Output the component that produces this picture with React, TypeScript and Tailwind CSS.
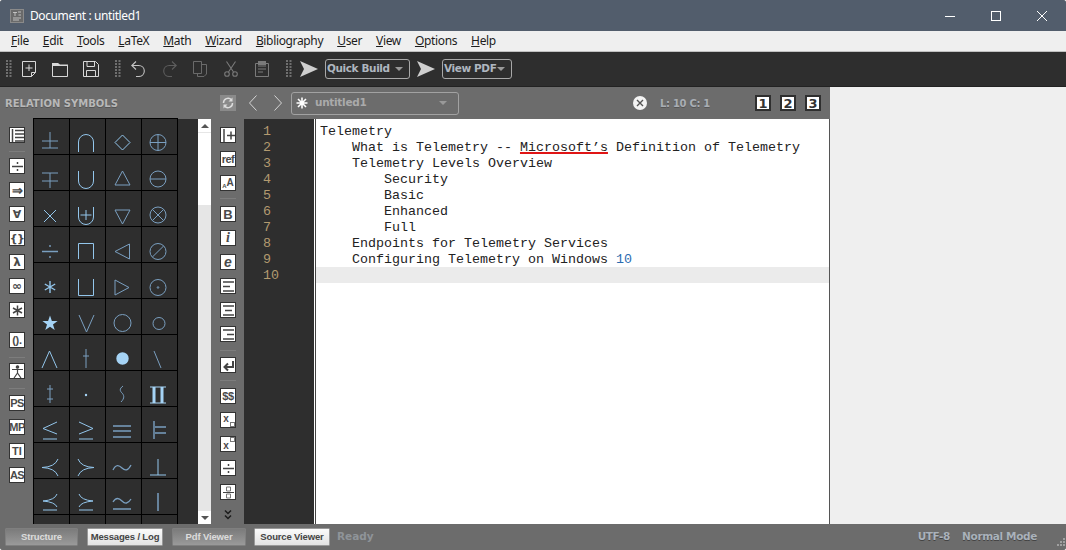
import React from 'react';

const circ = (cx: number, cy: number, r: number) =>
  `M${cx - r} ${cy}a${r} ${r} 0 1 0 ${2 * r} 0a${r} ${r} 0 1 0 ${-2 * r} 0`;

interface Sym {
  d?: string;
  dim?: boolean;
  fill?: boolean;
  w?: number;
}

// symbol cells, coordinates are relative to the grid line above / left of the cell
const symbols: Sym[] = [
  { d: 'M9 22H25M17 13V29M9 29H25', dim: true },
  { d: 'M9.5 33V23a7.5 7.5 0 0 1 15 0V33' },
  { d: 'M17.5 16L25 23.5L17.5 31L10 23.5Z' },
  { d: circ(17, 23.5, 8) + 'M9 23.5H25M17 15.5V31.5', dim: true },

  { d: 'M9 18H25M9 26H25M17 18V33', dim: true },
  { d: 'M9.5 16V26a7.5 7.5 0 0 0 15 0V16' },
  { d: 'M17.5 16L25 30H10Z', dim: true },
  { d: circ(17, 24, 8) + 'M9 24H25', dim: true },

  { d: 'M11 19L23 31M23 19L11 31' },
  { d: 'M9.5 16V26a7.5 7.5 0 0 0 15 0V16M11.5 24H22.5M17 19V29' },
  { d: 'M10 19H25L17.5 33Z', dim: true },
  { d: circ(17, 24, 8) + 'M11.4 18.4L22.6 29.6M22.6 18.4L11.4 29.6', dim: true },

  { d: 'M9 24.5H25M17 18V20M17 29V31', dim: true, w: 1.4 },
  { d: 'M9.5 32V16.5H24.5V32' },
  { d: 'M24.5 17V32L10 24.5Z', dim: true },
  { d: circ(17, 24.5, 8) + 'M11.4 30L22.6 19', dim: true },

  { d: 'M17 18V30M11.8 21L22.2 27M22.2 21L11.8 27', w: 1.4 },
  { d: 'M9.5 16V32.5H24.5V16' },
  { d: 'M10 17V32L24 24.5Z', dim: true },
  { d: circ(17, 24.5, 8) + circ(17, 24.5, 0.8), dim: true },

  { d: 'M17 16.5L18.9 22H24.6L20 25.5L21.7 31L17 27.7L12.3 31L14 25.5L9.4 22H15.1Z', fill: true },
  { d: 'M10 16L17.5 33L25 16', dim: true },
  { d: circ(17.5, 24, 8.5), dim: true },
  { d: circ(18, 24.5, 6), dim: true },

  { d: 'M9 33L16.5 16L24 33' },
  { d: 'M17 14V33M14 21H20', dim: true },
  { d: circ(17.5, 23.5, 6.2), fill: true },
  { d: 'M13 16L20 33', dim: true },

  { d: 'M17 14V32M14 18H20M14 28H20', dim: true },
  { d: circ(17, 24, 1.2), fill: true },
  { d: 'M18 15C14 18 15 20 17 22S20 27 16 31', dim: true },
  { d: 'M9 15.5H25V16.5H9ZM9 31.5H25V32.5H9ZM11.5 16H14.5V32H11.5ZM19.5 16H22.5V32H19.5Z', fill: true },

  { d: 'M24 15L10 21.5L24 27M10 32H24' },
  { d: 'M10 15L24 21.5L10 27M10 32H24' },
  { d: 'M8 19H26M8 24H26M8 30H26', dim: true, w: 1.3 },
  { d: 'M13 14V32M14 20H25M14 26H25', dim: true, w: 1.4 },

  { d: 'M25 16Q22 24 9 24.5Q22 25 25 33' },
  { d: 'M9 16Q12 24 25 24.5Q12 25 9 33' },
  { d: 'M8 27C11 21 14 22 17 25S23 28 26 22', dim: true, w: 1.3 },
  { d: 'M17 16V32M9 32H25' },

  { d: 'M24 15Q22 21 10 22Q22 23 24 28M10 31H24' },
  { d: 'M10 15Q12 21 24 22Q12 23 10 28M10 31H24' },
  { d: 'M8 23C11 18 14 19 17 22S23 25 26 20M8 30H26', dim: true, w: 1.3 },
  { d: 'M17 14V32', dim: true, w: 1.5 },

  {}, {}, {}, {},
];

const SymbolCell: React.FC<{ s: Sym }> = ({ s }) => (
  <div className="bg-[#2e2e2e]">
    {s.d && (
      <svg viewBox="1 0 35 35" className="w-[35px] h-[35px]">
        <path
          d={s.d}
          fill={s.fill ? '#a5d3f5' : 'none'}
          stroke={s.fill ? 'none' : s.dim ? '#7a9fc0' : '#93c6ec'}
          strokeWidth={s.w ?? 1}
        />
      </svg>
    )}
  </div>
);

const Tool: React.FC<{ className?: string; children: React.ReactNode }> = ({ className = '', children }) => (
  <div
    className={`w-4 h-4 shrink-0 flex items-center justify-center bg-white border-[1.5px] border-[#333] text-[#4a4a4a] font-bold text-[11px] leading-none whitespace-nowrap ${className}`}
  >
    {children}
  </div>
);

const Sep: React.FC<{ className?: string }> = ({ className = '' }) => (
  <div className={`w-4 h-px shrink-0 bg-[#7d7d7d] ${className}`} />
);

const Lines: React.FC<{ d: string }> = ({ d }) => (
  <svg viewBox="0 0 13 13" className="w-[13px] h-[13px]" fill="none" stroke="#444" strokeWidth="1.5">
    <path d={d} />
  </svg>
);

const Grip: React.FC<{ className?: string }> = ({ className = '' }) => (
  <svg viewBox="0 0 6 18" className={`w-[6px] h-[18px] shrink-0 ${className}`} fill="#6f6f6f">
    {[0, 3, 6, 9, 12, 15].map((y) => (
      <React.Fragment key={y}>
        <rect x="0" y={y} width="2" height="2" />
        <rect x="3.5" y={y} width="2" height="2" />
      </React.Fragment>
    ))}
  </svg>
);

const PlayArrow: React.FC<{ className?: string }> = ({ className = '' }) => (
  <svg viewBox="0 0 18 16" className={`w-[18px] h-4 shrink-0 ${className}`} fill="#cfcfcf">
    <path d="M0 0L18 8L0 16L4 8Z" />
  </svg>
);

const Combo: React.FC<{ label: string; className: string }> = ({ label, className }) => (
  <div className={`h-5 shrink-0 flex items-center justify-between pl-[1px] pr-[6px] border border-[#a8a8a8] rounded-[3px] ${className}`}>
    <span className="font-['DejaVu_Sans'] font-bold text-[10.5px] text-[#aeb6bf] tracking-[-0.4px]">{label}</span>
    <span className="w-0 h-0 border-x-[4px] border-x-transparent border-t-[4px] border-t-[#999]" />
  </div>
);

const menus = ['File', 'Edit', 'Tools', 'LaTeX', 'Math', 'Wizard', 'Bibliography', 'User', 'View', 'Options', 'Help'];

const editorLines: React.ReactNode[] = [
  'Telemetry',
  <>
    {'    What is Telemetry -- '}
    <span className="underline decoration-[#e01515] decoration-[1.5px] underline-offset-[1px]">Microsoft’s</span>
    {' Definition of Telemetry'}
  </>,
  '    Telemetry Levels Overview',
  '        Security',
  '        Basic',
  '        Enhanced',
  '        Full',
  '    Endpoints for Telemetry Services',
  <>
    {'    Configuring Telemetry on Windows '}
    <span className="text-[#2b6cb0]">10</span>
  </>,
  '',
];

const ViewButton: React.FC<{ label: string; active?: boolean; className: string }> = ({ label, active, className }) => (
  <div
    className={`h-[18px] shrink-0 flex items-center justify-center whitespace-nowrap font-bold text-[9.5px] tracking-[-0.15px] rounded-[1px] ${
      active
        ? 'bg-gradient-to-b from-[#fbfbfb] to-[#e2e2e2] text-[#444] border border-[#999]'
        : 'bg-gradient-to-b from-[#7b7b7b] to-[#9a9a9a] text-[#dcdcdc] border border-[#7f7f7f]'
    } ${className}`}
  >
    {label}
  </div>
);

export default function App() {
  return (
    <div className="w-[1066px] h-[550px] flex flex-col overflow-hidden rounded-[3px] bg-[#6c6c6c] font-['Liberation_Sans',sans-serif]">
      {/* Title bar */}
      <div className="h-[31px] shrink-0 flex items-center bg-[#525d6c] pl-[10px] pr-px">
        <svg viewBox="0 0 14 14" className="w-[14px] h-[14px] shrink-0">
          <rect width="14" height="14" fill="#8a8a8a" />
          <rect x="1" y="1" width="12" height="12" fill="#6a6a6a" />
          <path d="M3 3.5H7M5 3.5V7M8 3H11M8.5 6H11M3 9H11M3 11H9" stroke="#d5d5d5" strokeWidth="0.8" fill="none" />
        </svg>
        <span className="ml-[6px] font-['Noto_Sans'] text-[12px] tracking-[-0.4px] text-white">Document : untitled1</span>
        <div className="ml-auto flex">
          <div className="w-[46px] h-[31px] flex items-center justify-center">
            <svg viewBox="0 0 10 10" className="w-[10px] h-[10px]" stroke="#fff" strokeWidth="1"><path d="M0 5.5H10" /></svg>
          </div>
          <div className="w-[46px] h-[31px] flex items-center justify-center">
            <svg viewBox="0 0 10 10" className="w-[10px] h-[10px]" stroke="#fff" strokeWidth="1" fill="none"><rect x="0.5" y="0.5" width="9" height="9" /></svg>
          </div>
          <div className="w-[46px] h-[31px] flex items-center justify-center">
            <svg viewBox="0 0 10 10" className="w-[10px] h-[10px]" stroke="#fff" strokeWidth="1"><path d="M0 0L10 10M10 0L0 10" /></svg>
          </div>
        </div>
      </div>

      {/* Menu bar */}
      <div className="h-[21px] shrink-0 flex items-center gap-[14px] pl-[11px] bg-[#efefef] border-b border-[#c0c0c0] font-['Noto_Sans'] text-[12px] tracking-[-0.35px] text-[#1c1c1c]">
        {menus.map((m) => (
          <span key={m}>
            <span className="underline">{m[0]}</span>
            {m.slice(1)}
          </span>
        ))}
      </div>

      {/* Main toolbar */}
      <div className="h-[35px] shrink-0 flex items-center pl-[6px] bg-[#2e2e2e] border-b border-[#222]">
        <Grip />
        <svg viewBox="0 0 14 16" className="ml-[10px] w-[14px] h-4 shrink-0" fill="none" stroke="#d8d8d8">
          <path d="M.5.5H13.5V11.5L9.5 15.5H.5ZM9.5 15.5V11.5H13.5M7 3.5V10M3.5 7H10.5" />
        </svg>
        <svg viewBox="0 0 16 15" className="ml-4 w-4 h-[15px] shrink-0">
          <path d="M.5 3.5H15.5V14.5H.5Z" fill="none" stroke="#d8d8d8" />
          <path d="M0 4V1H6L8 2.5H16V4Z" fill="#d8d8d8" />
        </svg>
        <svg viewBox="0 0 16 16" className="ml-[15px] w-4 h-4 shrink-0" fill="none" stroke="#d8d8d8">
          <path d="M.5.5H12.5L15.5 3.5V15.5H.5ZM4 .5V5.5H11.5V.5M3.5 15.5V9.5H12.5V15.5" />
        </svg>
        <Grip className="ml-4" />
        <svg viewBox="0 0 14 16" className="ml-[10px] w-[14px] h-4 shrink-0" fill="none" stroke="#c4c4c4" strokeWidth="1.1">
          <path d="M5 .5L.8 4.5L5 8.5M1 4.5H7.5C11 4.5 13.3 7 13.3 10S11 15.5 7.5 15.5H5" />
        </svg>
        <svg viewBox="0 0 14 16" className="ml-[18px] w-[14px] h-4 shrink-0" fill="none" stroke="#5e5e5e" strokeWidth="1.1">
          <path d="M9 .5L13.2 4.5L9 8.5M13 4.5H6.5C3 4.5 .7 7 .7 10S3 15.5 6.5 15.5H9" />
        </svg>
        <svg viewBox="0 0 14 16" className="ml-4 w-[14px] h-4 shrink-0" fill="none" stroke="#6a6a6a">
          <path d="M.5.5H8.5V12.5H.5ZM8.5 3.5H13.5V13L11 15.5H4.5V12.5" />
        </svg>
        <svg viewBox="0 0 14 16" className="ml-[17px] w-[14px] h-4 shrink-0" fill="none" stroke="#7a7a7a" strokeWidth="1.1">
          <path d="M2.5.5L9.5 11M11.5.5L4.5 11" />
          <circle cx="3" cy="13" r="2.3" />
          <circle cx="11" cy="13" r="2.3" />
        </svg>
        <svg viewBox="0 0 14 16" className="ml-[17px] w-[14px] h-4 shrink-0" fill="none" stroke="#7a7a7a">
          <path d="M.5 2.5H13.5V15.5H.5ZM3 5H11M3 8H11M3 11H8" />
          <rect x="3.5" y="0" width="7" height="3.5" fill="#7a7a7a" />
        </svg>
        <Grip className="ml-[17px]" />
        <PlayArrow className="ml-2" />
        <Combo label="Quick Build" className="ml-[7px] w-[85px]" />
        <PlayArrow className="ml-[7px]" />
        <Combo label="View PDF" className="ml-[7px] w-[70px]" />
      </div>

      {/* Workspace */}
      <div className="flex-1 min-h-0 flex">
        {/* Structure panel */}
        <div className="w-[212px] shrink-0 flex flex-col">
          <div className="h-[32px] shrink-0 flex items-center pl-[5px] font-['DejaVu_Sans'] font-bold text-[10px] text-[#b8b8b8] [text-shadow:0_1px_0_#555]">
            RELATION SYMBOLS
          </div>
          <div className="flex-1 min-h-0 flex">
            <div className="w-[33px] shrink-0 flex flex-col pl-[9px] pt-2">
              <Tool>
                <Lines d="M1.5 0V13M4 1.5H13M4 5H13M4 8.5H13M4 12H13" />
              </Tool>
              <Sep className="mt-2" />
              <Tool className="mt-[6px]">
                <Lines d="M1 6.5H12M6.5 2V4M6.5 9V11" />
              </Tool>
              <Tool className="mt-2 text-[13px]">⇒</Tool>
              <Tool className="mt-2 font-['DejaVu_Sans'] text-[11px]">∀</Tool>
              <Tool className="mt-2 font-['DejaVu_Sans'] text-[8px] tracking-[-0.5px]">{'{}'}</Tool>
              <Tool className="mt-2 font-['DejaVu_Sans'] text-[12px]">λ</Tool>
              <Tool className="mt-2 font-['DejaVu_Sans'] text-[12px]">∞</Tool>
              <Tool className="mt-2">
                <Lines d="M6.5 1.5V11.5M2 4L11 9M11 4L2 9" />
              </Tool>
              <Tool className="mt-[14px] text-[9px] tracking-[-0.3px]">().</Tool>
              <Sep className="mt-[9px]" />
              <Tool className="mt-[5px]">
                <svg viewBox="0 0 13 13" className="w-[13px] h-[13px]" fill="none" stroke="#444" strokeWidth="1.2">
                  <circle cx="6.5" cy="2" r="1.2" fill="#444" />
                  <path d="M1 4.5H12M6.5 4V8M6.5 8L3 13M6.5 8L10 13" />
                </svg>
              </Tool>
              <Sep className="mt-[9px]" />
              <Tool className="mt-[6px] text-[10px] tracking-[-0.6px]">PS</Tool>
              <Tool className="mt-2 text-[8.5px] tracking-[-0.6px]">MP</Tool>
              <Tool className="mt-2">TI</Tool>
              <Tool className="mt-2 text-[10px] tracking-[-0.6px]">AS</Tool>
            </div>
            <div className="w-[145px] shrink-0 -mt-px h-[406px] overflow-hidden border-t border-black bg-black px-px grid grid-cols-[repeat(4,35px)] auto-rows-[35px] gap-px">
              {symbols.map((s, i) => (
                <SymbolCell key={i} s={s} />
              ))}
            </div>
            <div className="w-[20px] shrink-0 bg-[#2e2e2e]" />
            <div className="w-[13px] shrink-0 flex flex-col bg-[#e6e6e6]">
              <div className="h-[13px] shrink-0 bg-white flex items-center justify-center">
                <span className="w-0 h-0 border-x-[4px] border-x-transparent border-b-[4px] border-b-[#555]" />
              </div>
              <div className="mt-px h-[72px] shrink-0 bg-white" />
              <div className="mt-auto h-[13px] shrink-0 bg-white flex items-center justify-center">
                <span className="w-0 h-0 border-x-[4px] border-x-transparent border-t-[4px] border-t-[#555]" />
              </div>
            </div>
          </div>
        </div>

        {/* Editor tool strip */}
        <div className="w-[32px] shrink-0 flex flex-col">
          <div className="h-[32px] shrink-0 flex items-center pl-2">
            <svg viewBox="0 0 16 16" className="w-4 h-4">
              <rect width="16" height="16" fill="#8a8a8a" />
              <path d="M3.5 8A4.5 4.5 0 0 1 11.5 5M12.5 8A4.5 4.5 0 0 1 4.5 11" fill="none" stroke="#dcdcdc" strokeWidth="1.5" />
              <path d="M12.5 2.5V6.5H8.5ZM3.5 13.5V9.5H7.5Z" fill="#dcdcdc" />
            </svg>
          </div>
          <div className="flex-1 min-h-0 flex flex-col pl-2 pt-2">
            <Tool>
              <Lines d="M2 0V13M5 6.5H13M9 2.5V10.5" />
            </Tool>
            <Tool className="mt-2 text-[10px] tracking-[-0.5px]">ref</Tool>
            <Tool className="mt-2 items-end">
              <span className="text-[6px] leading-[7px]">A</span>
              <span className="text-[10px] leading-[12px] mb-[1px]">A</span>
            </Tool>
            <Sep className="mt-[7px]" />
            <Tool className="mt-[7px] text-[13px]">B</Tool>
            <Tool className="mt-2 font-['Liberation_Serif'] italic text-[14px]">i</Tool>
            <Tool className="mt-2 italic text-[14px]">e</Tool>
            <Tool className="mt-2">
              <Lines d="M1 2H12M1 6.5H8M1 11H12" />
            </Tool>
            <Tool className="mt-2">
              <Lines d="M1 2H12M3 6.5H10M1 11H12" />
            </Tool>
            <Tool className="mt-2">
              <Lines d="M1 2H12M5 6.5H12M1 11H12" />
            </Tool>
            <Sep className="mt-2" />
            <Tool className="mt-[6px]">
              <svg viewBox="0 0 13 13" className="w-[13px] h-[13px]" fill="none" stroke="#444" strokeWidth="2">
                <path d="M11 2V8H3M6 4.5L2.5 8L6 11.5" />
              </svg>
            </Tool>
            <Sep className="mt-[7px]" />
            <Tool className="mt-[7px] text-[10px] tracking-[-0.4px]">$$</Tool>
            <Tool className="mt-2 relative">
              <span className="mb-[3px] mr-[4px] text-[10px]">x</span>
              <span className="absolute right-0 bottom-0 w-[5px] h-[5px] border border-[#777]" />
            </Tool>
            <Tool className="mt-2 relative">
              <span className="mt-[3px] mr-[4px] text-[10px]">x</span>
              <span className="absolute right-0 top-0 w-[5px] h-[5px] border border-[#777]" />
            </Tool>
            <Tool className="mt-2">
              <Lines d="M1 6.5H12M6.5 2V4M6.5 9V11" />
            </Tool>
            <Tool className="mt-2">
              <svg viewBox="0 0 13 13" className="w-[13px] h-[13px]" fill="none" stroke="#777">
                <path d="M4.5 1H8.5V5H4.5ZM4.5 8H8.5V12H4.5Z" />
                <path d="M1 6.5H12" stroke="#444" />
              </svg>
            </Tool>
            <svg viewBox="0 0 8 10" className="ml-1 mt-[10px] w-2 h-[10px]" fill="none" stroke="#1c1c1c" strokeWidth="1.5">
              <path d="M1 .5L4 3.5L7 .5M1 5.5L4 8.5L7 5.5" />
            </svg>
          </div>
        </div>

        {/* Editor */}
        <div className="w-[586px] shrink-0 flex flex-col">
          <div className="h-[32px] shrink-0 flex items-center pl-[5px] pr-[9px]">
            <svg viewBox="0 0 8 16" className="w-2 h-4 shrink-0" fill="none" stroke="#d5d5d5"><path d="M7.5 .5L.5 8L7.5 15.5" /></svg>
            <svg viewBox="0 0 8 16" className="ml-[17px] w-2 h-4 shrink-0" fill="none" stroke="#d5d5d5"><path d="M.5 .5L7.5 8L.5 15.5" /></svg>
            <div className="ml-[9px] w-[168px] h-[23px] shrink-0 flex items-center pl-[4px] pr-[11px] border border-[#a2a2a2] rounded-[3px]">
              <svg viewBox="0 0 12 12" className="w-3 h-3 shrink-0" stroke="#fff" strokeWidth="1.6">
                <path d="M6 .5V11.5M.5 6H11.5M2 2L10 10M10 2L2 10" />
              </svg>
              <span className="ml-[7px] font-['DejaVu_Sans'] font-bold text-[10.5px] text-[#aaaaaa] tracking-[-0.3px]">untitled1</span>
              <span className="ml-auto w-0 h-0 border-x-[4px] border-x-transparent border-t-[4px] border-t-[#999]" />
            </div>
            <div className="ml-[174px] w-[14px] h-[14px] shrink-0 rounded-full bg-[#f4f4f4] flex items-center justify-center">
              <svg viewBox="0 0 8 8" className="w-2 h-2" stroke="#555" strokeWidth="1.4"><path d="M1 1L7 7M7 1L1 7" /></svg>
            </div>
            <span className="ml-[13px] font-['DejaVu_Sans'] font-bold text-[10px] text-[#a9aeb4] tracking-[-0.3px] [text-shadow:0_1px_0_#555]">L: 10 C: 1</span>
            <div className="ml-auto flex gap-[9px]">
              {['1', '2', '3'].map((n) => (
                <div key={n} className="w-4 h-4 flex items-center justify-center bg-white border-2 border-[#2f2f2f] font-['DejaVu_Sans'] font-bold text-[13px] leading-none text-[#333]">
                  {n}
                </div>
              ))}
            </div>
          </div>
          <div className="flex-1 min-h-0 flex bg-white border-r border-[#555]">
            <div className="w-[70px] shrink-0 pt-1 pl-[19px] bg-[#2e2e2e] font-['Liberation_Mono'] text-[13.33px] leading-[18px] text-[#b39a70]">
              {editorLines.map((_, i) => (
                <div key={i} className="h-4">{i + 1}</div>
              ))}
            </div>
            <div className="w-px shrink-0 ml-px bg-[#444]" />
            <div className="flex-1 min-w-0 pt-1 font-['Liberation_Mono'] text-[13.33px] leading-[18px] text-[#222]">
              {editorLines.map((l, i) => (
                <div key={i} className={`pl-1 h-4 whitespace-pre ${i === 9 ? 'bg-[#ebebeb]' : ''}`}>
                  {l}
                </div>
              ))}
            </div>
          </div>
        </div>

        {/* Empty viewer pane */}
        <div className="flex-1 bg-[#efefef]" />
      </div>

      {/* Status bar */}
      <div className="h-[26px] shrink-0 flex items-center pl-[5px] pr-[29px] bg-[#6c6c6c] relative">
        <ViewButton label="Structure" className="w-[73px]" />
        <ViewButton label="Messages / Log" active className="ml-[9px] w-[76px]" />
        <ViewButton label="Pdf Viewer" className="ml-[9px] w-[74px]" />
        <ViewButton label="Source Viewer" active className="ml-2 w-[76px]" />
        <span className="ml-[7px] font-['DejaVu_Sans'] font-bold text-[10.5px] text-[#8f9499]">Ready</span>
        <span className="ml-auto font-['DejaVu_Sans'] font-bold text-[10.5px] text-[#aab2bb] tracking-[-0.35px] [text-shadow:0_1px_0_#444]">UTF-8</span>
        <span className="ml-3 font-['DejaVu_Sans'] font-bold text-[10.5px] text-[#aab2bb] tracking-[-0.35px] [text-shadow:0_1px_0_#444]">Normal Mode</span>
        <svg viewBox="0 0 10 10" className="absolute right-px bottom-[2px] w-[10px] h-[10px]" fill="#a0a0a0">
          <path d="M8 0h2v2H8zM5 3h2v2H5zM8 3h2v2H8zM2 6h2v2H2zM5 6h2v2H5zM8 6h2v2H8z" />
        </svg>
      </div>
    </div>
  );
}
